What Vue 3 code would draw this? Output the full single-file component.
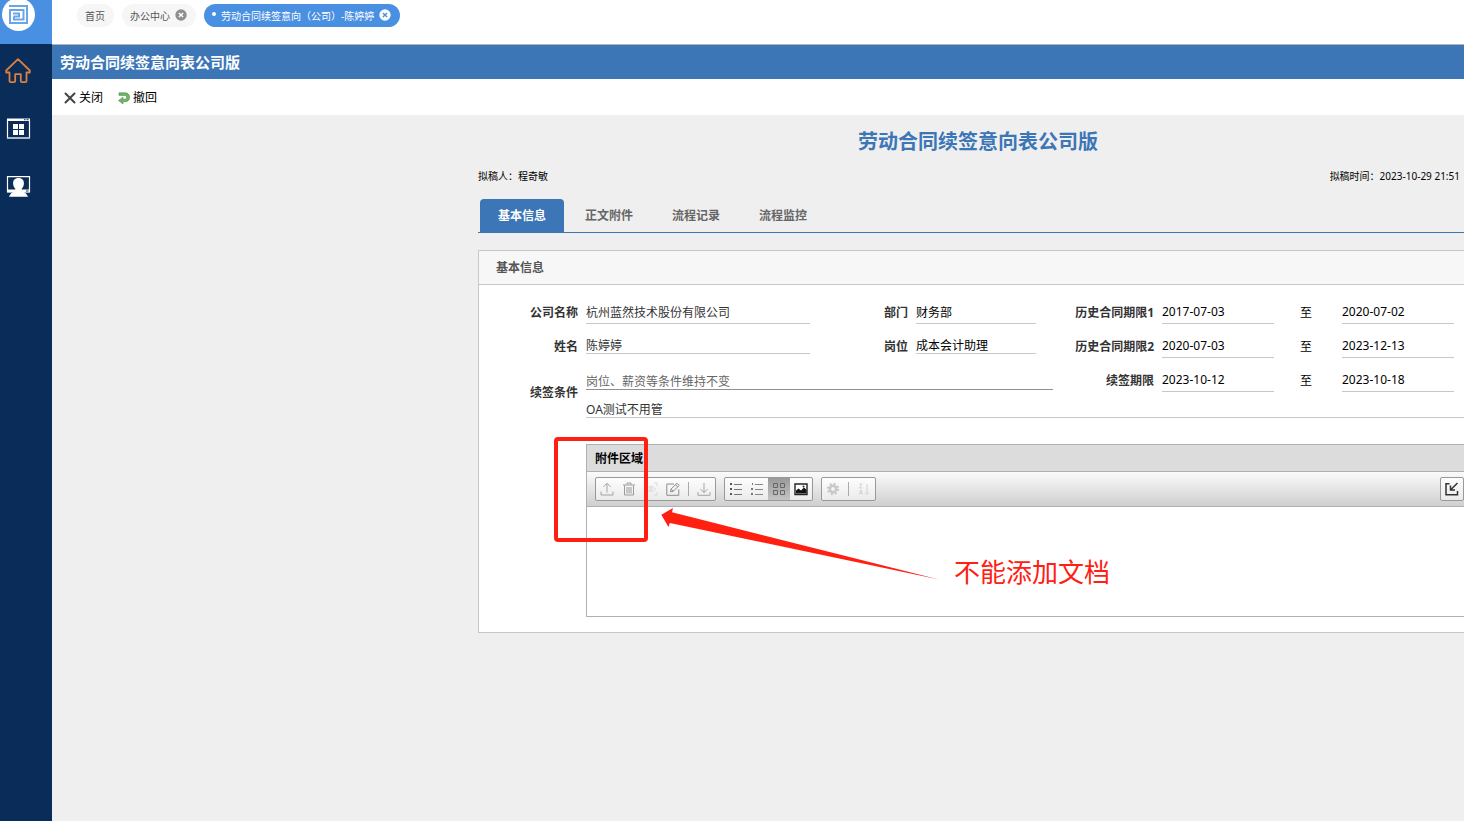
<template>
  <div class="page">
    <!-- Left menu -->
    <nav class="sidebar">
      <a class="logo" href="#" aria-label="首页">
        <svg width="52" height="44" viewBox="0 0 52 44">
          <circle cx="18.500" cy="14.500" r="16.500" fill="#fff" />
          <g fill="none" stroke="#6aa5ea" stroke-width="2">
            <path d="M9 6h18v17H10V11" />
            <path d="M9 10h14.500v9.500H14V16.500" />
            <path d="M13 13.500h6v3h-5.500" />
          </g>
        </svg>
      </a>
      <a class="menu-item" href="#" aria-label="主页">
        <svg width="26" height="26" viewBox="0 0 26 26" fill="none" stroke="#dd7f3f" stroke-width="1.800" stroke-linejoin="round">
          <path d="M13 1.200 1.200 12.500v2h3.300v8.500q0 1.200 1.200 1.200h3.300q1.200 0 1.200-1.200v-6.800h5.600v6.800q0 1.200 1.200 1.200h3.300q1.200 0 1.200-1.200v-8.500h3.300v-2z" />
        </svg>
      </a>
      <a class="menu-item" href="#" aria-label="应用">
        <svg width="26" height="26" viewBox="0 0 26 26">
          <path d="M2.500 4h22v18h-22z" fill="none" stroke="#fff" stroke-width="1.200" />
          <path d="M2 2.500h23v2.500H2z" fill="#fff" />
          <path d="M19 3.700h1.500M21.500 3.700h2" stroke="#0a2c59" />
          <path d="M2 22h23" stroke="#b7c1cf" stroke-width="1.500" />
          <path d="M8 8h5v5H8zM14 8h5v5h-5zM8 14h5v5H8zM14 14h5v5h-5z" fill="#fff" />
        </svg>
      </a>
      <a class="menu-item" href="#" aria-label="人员">
        <svg width="26" height="26" viewBox="0 0 26 26">
          <path d="M2.500 2.600h22v15h-22z" fill="none" stroke="#fff" stroke-width="1.200" />
          <path d="M2 15.500h23v3H2z" fill="#fff" />
          <path d="M21 17h2.500" stroke="#0a2c59" />
          <path d="M13.500 4c3.700 0 5.500 2.300 5.400 5.500 0 2.500-1 4-2.200 5.200v2.200c2.600 1.200 5.300 2.500 6.300 5.800H4c1-3.300 3.700-4.600 6.300-5.800v-2.200C9.100 13.500 8.100 12 8.100 9.500 8 6.300 9.800 4 13.500 4z" fill="#fff" />
        </svg>
      </a>
    </nav>

    <main class="main">
      <header class="topbar">
        <div v-for="t in openTabs" :key="t.name" class="pill" :class="{ current: t.current }">
          <span v-if="t.current" class="dot"></span>
          <a href="#">{{ t.name }}</a>
          <button v-if="t.closable" class="pill-close" aria-label="关闭标签">
            <svg width="12" height="12" viewBox="0 0 12 12">
              <circle class="disc" cx="6" cy="6" r="5.700" />
              <path class="cross" d="M3.900 3.900l4.200 4.200M8.100 3.900L3.900 8.100" stroke-width="1.400" />
            </svg>
          </button>
        </div>
      </header>

      <div class="titlebar">劳动合同续签意向表公司版</div>

      <div class="actions">
        <button>
          <svg width="12" height="12" viewBox="0 0 12 12" fill="none" stroke="#444" stroke-width="2" stroke-linecap="round">
            <path d="M1.500 1.500l9 9M10.500 1.500l-9 9" />
          </svg>
          关闭
        </button>
        <button>
          <svg width="12" height="12" viewBox="0 0 12 12">
            <path d="M1 .8h6.500a4 4.300 0 0 1 0 8.900H5V12L.5 8.500 5 5.300V7.200h2.200a1.500 1.900 0 0 0 0-3.800H1z" fill="#6fb568" stroke="#4a9148" stroke-width=".6" />
          </svg>
          撤回
        </button>
      </div>

      <form class="sheet" @submit.prevent>
        <h1>劳动合同续签意向表公司版</h1>
        <div class="meta">
          <span>拟稿人：程奇敏</span>
          <span>拟稿时间：2023-10-29 21:51</span>
        </div>

        <div class="tabs">
          <button
            v-for="(name, i) in formTabs"
            :key="name"
            type="button"
            :class="{ active: activeTab === i }"
            @click="activeTab = i"
          >{{ name }}</button>
        </div>

        <section class="panel">
          <h2>基本信息</h2>
          <div class="fields">
            <label for="company">公司名称</label>
            <input id="company" class="soft" value="杭州蓝然技术股份有限公司" readonly />
            <label for="dept">部门</label>
            <input id="dept" value="财务部" readonly />
            <label for="from1">历史合同期限1</label>
            <input id="from1" value="2017-07-03" readonly />
            <label class="to" for="to1">至</label>
            <input id="to1" value="2020-07-02" readonly />

            <label for="name">姓名</label>
            <input id="name" class="soft low" value="陈婷婷" readonly />
            <label for="post">岗位</label>
            <input id="post" class="low" value="成本会计助理" readonly />
            <label for="from2">历史合同期限2</label>
            <input id="from2" value="2020-07-03" readonly />
            <label class="to" for="to2">至</label>
            <input id="to2" value="2023-12-13" readonly />

            <label class="tall" for="terms">续签条件</label>
            <input id="terms" class="terms" value="岗位、薪资等条件维持不变" readonly />
            <label for="from3">续签期限</label>
            <input id="from3" value="2023-10-12" readonly />
            <label class="to" for="to3">至</label>
            <input id="to3" value="2023-10-18" readonly />
            <input class="note soft" aria-label="续签条件说明" value="OA测试不用管" readonly />
          </div>

          <div class="attachment">
            <h3>附件区域</h3>
            <div class="toolbar">
              <div class="group">
                <button type="button" aria-label="上传">
                  <svg width="14" height="14" viewBox="0 0 14 14" stroke="#a3a3a3">
                    <path d="M1 9.500v3.500h12V9.500M7 10.500V1.500M3.500 4.800L7 1.300l3.500 3.500" />
                  </svg>
                </button>
                <button type="button" aria-label="删除">
                  <svg width="14" height="14" viewBox="0 0 14 14" stroke="#9a9a9a">
                    <path d="M1 3h12M5 2.500v-1.500h4v1.500M2.500 3.500v9.500h9V3.500M5 5v6.500M7 5v6.500M9 5v6.500" />
                  </svg>
                </button>
                <button type="button" aria-label="预览">
                  <svg width="14" height="14" viewBox="0 0 14 14" stroke="#dadada">
                    <path d="M1 4V1h3M10 1h3v3M13 10v3h-3M4 13H1v-3M2.500 7C5 3.700 9 3.700 11.500 7 9 10.300 5 10.300 2.500 7z" />
                    <circle cx="7" cy="7" r="1.300" />
                  </svg>
                </button>
                <button type="button" aria-label="编辑">
                  <svg width="14" height="14" viewBox="0 0 14 14" stroke="#8c8c8c">
                    <path d="M8 2H.8v11.300h12V7.500M4.500 9.800l.6-2.800L11 1.200l2.200 2.200-5.900 5.800zM9.500 2.700l2.200 2.200M5.200 7l2.100 2.200" />
                  </svg>
                </button>
                <i class="sep"></i>
                <button type="button" aria-label="下载">
                  <svg width="14" height="14" viewBox="0 0 14 14" stroke="#a3a3a3">
                    <path d="M1 10v3.300h12V10M7 1v9.500M3.500 7.200L7 10.700l3.500-3.500" />
                  </svg>
                </button>
              </div>

              <div class="group views">
                <button type="button" aria-label="列表">
                  <svg width="14" height="14" viewBox="0 0 14 14">
                    <path d="M1 1h2v2H1zM1 6h2v2H1zM1 11h2v2H1z" fill="#555" />
                    <path d="M5 2.500h8M5 7.500h8M5 12.500h8" stroke="#777" />
                  </svg>
                </button>
                <button type="button" aria-label="详细列表">
                  <svg width="14" height="14" viewBox="0 0 14 14">
                    <path d="M2 1h1v2H2zM1 6h2v2H1zM1 11h2v2H1z" fill="#777" />
                    <path d="M5 2.500h8M5 7.500h8M5 12.500h8" stroke="#888" />
                  </svg>
                </button>
                <button type="button" class="on" aria-label="图标">
                  <svg width="14" height="14" viewBox="0 0 14 14" stroke="#666">
                    <path d="M1.500 1.500h4v4h-4zM8.500 1.500h4v4h-4zM1.500 8.500h4v4h-4zM8.500 8.500h4v4h-4z" />
                  </svg>
                </button>
                <button type="button" aria-label="图片">
                  <svg width="14" height="14" viewBox="0 0 14 14">
                    <path d="M1 2h12v10.500H1z" fill="#fff" stroke="#222" stroke-width="1.400" />
                    <path d="M2 11.500V8.500l2.500-2 2.500 2 3-3 2.500 2.200v3.800z" fill="#111" />
                    <circle cx="9.500" cy="4.500" r="1" fill="#222" />
                  </svg>
                </button>
              </div>

              <div class="group">
                <button type="button" aria-label="设置">
                  <svg width="14" height="14" viewBox="0 0 14 14" stroke="#c8c8c8">
                    <circle cx="7" cy="7" r="3.200" stroke-width="2.600" />
                    <circle cx="7" cy="7" r="5.200" stroke-width="2" stroke-dasharray="2 2.084" />
                  </svg>
                </button>
                <i class="sep"></i>
                <button type="button" aria-label="排序">
                  <svg width="14" height="14" viewBox="0 0 14 14" stroke="#d2d2d2">
                    <path d="M2.500 2H5L2.500 6H5.500M2.500 12.500l1.500-4.500 1.500 4.500M3 11h2M10 2v10.500M8 10.500l2 2 2-2" />
                  </svg>
                </button>
              </div>

              <div class="group resize">
                <button type="button" aria-label="收起">
                  <svg width="14" height="14" viewBox="0 0 14 14" stroke="#333" stroke-width="1.500">
                    <path d="M4.500 1.800H1v11h11.500V9M12.500 1L6 7.500M5.500 3.500V8H10" />
                  </svg>
                </button>
              </div>
            </div>
            <div class="files"></div>

            <!-- Markup drawn over the form -->
            <div class="mark-box"></div>
            <svg class="mark-arrow" width="282" height="76" viewBox="0 0 282 76">
              <path d="M1.300 8.700L13 2l-1 4.200L279 73.500 9.800 17l-1.300 4z" fill="#ff2012" />
            </svg>
            <p class="mark-text">不能添加文档</p>
          </div>
        </section>
      </form>
    </main>
  </div>
</template>

<script setup>
import { ref } from 'vue';

const openTabs = [
  { name: '首页' },
  { name: '办公中心', closable: true },
  { name: '劳动合同续签意向（公司）-陈婷婷', closable: true, current: true }
];

const formTabs = ['基本信息', '正文附件', '流程记录', '流程监控'];
const activeTab = ref(0);
</script>

<style>
body {
  margin: 0;
  background: #efefef;
}
</style>

<style scoped>
.page {
  display: flex;
  min-height: 100vh;
  overflow: hidden;
  font-family: "Noto Sans", "Noto Sans CJK SC", sans-serif;
  font-size: 12px;
  line-height: 18px;
  color: #000;
}

button,
input {
  margin: 0;
  padding: 0;
  border: 0;
  border-radius: 0;
  background: none;
  font: inherit;
  color: inherit;
  outline: none;
}

a {
  color: inherit;
  text-decoration: none;
}

svg {
  display: block;
  flex: none;
}

/* Sidebar */
.sidebar {
  flex: none;
  width: 52px;
  background: #0a2c59;
}

.logo {
  display: block;
  height: 44px;
  background: #4a90e2;
}

.menu-item {
  display: block;
  padding: 14px 0 18px 5px;
}

.main {
  flex: 1;
  min-width: 0;
}

/* Open page tabs */
.topbar {
  display: flex;
  align-items: flex-start;
  gap: 8px;
  height: 40px;
  padding: 4px 0 0 25px;
  background: #fff;
  border-bottom: 1px solid #b5b5b5;
}

.pill {
  display: flex;
  align-items: center;
  height: 23px;
  padding: 0 9px 0 8px;
  border-radius: 12px;
  background: #f6f6f6;
  color: #555;
  font-size: 10px;
  white-space: nowrap;
}

.pill.current {
  background: #4a90e2;
  color: #fff;
}

.dot {
  width: 4px;
  height: 4px;
  margin: 0 5px 3px 0;
  border-radius: 50%;
  background: #fff;
}

.pill-close {
  margin: 0 0 2px 5px;
}

.disc {
  fill: #8f8f8f;
}

.cross {
  stroke: #fff;
}

.current .disc {
  fill: #fff;
}

.current .cross {
  stroke: #4a90e2;
}

.titlebar {
  padding: 0 8px;
  background: #3c76b7;
  color: #fff;
  font-size: 15px;
  font-weight: bold;
  line-height: 34px;
}

.actions {
  display: flex;
  gap: 15px;
  height: 35px;
  padding: 1px 12px 0;
  background: #fff;
}

.actions button {
  display: flex;
  align-items: center;
  gap: 3px;
}

/* Form */
.sheet {
  margin-right: -14px;
  padding: 13px 0 40px 426px;
}

h1 {
  margin: 0;
  color: #3c76b7;
  font-size: 20px;
  line-height: 28px;
  text-align: center;
}

.meta {
  display: flex;
  justify-content: space-between;
  padding: 11px 18px 14px 0;
  font-size: 10px;
}

.tabs {
  display: flex;
  gap: 3px;
  padding-left: 2px;
  border-bottom: 1px solid #3c76b7;
}

.tabs button {
  height: 33px;
  padding: 0 18px;
  border-radius: 4px 4px 0 0;
  color: #666;
  font-weight: bold;
}

.tabs .active {
  background: #3c76b7;
  color: #fff;
}

.panel {
  margin-top: 17px;
  border: 1px solid #c8c8c8;
  background: #fff;
}

h2 {
  margin: 0;
  padding: 0 17px;
  border-bottom: 1px solid #c8c8c8;
  background: #f7f7f7;
  color: #555;
  font-size: 12px;
  line-height: 33px;
}

.fields {
  display: grid;
  grid-template-columns: 99px 224px 90px 120px 110px 112px 52px 112px;
  grid-template-rows: 34px 34px 34px 24px;
  column-gap: 8px;
  align-items: center;
  padding-top: 10px;
}

label {
  padding-top: 2px;
  color: #333;
  font-weight: bold;
  text-align: right;
}

.to {
  padding-right: 4px;
  color: #000;
  font-weight: normal;
  text-align: center;
}

.fields input {
  box-sizing: border-box;
  width: 100%;
  height: 24px;
  border-bottom: 1px solid #c8c8c8;
}

.fields .soft {
  color: #333;
}

.fields .low {
  height: 16px;
}

.tall {
  grid-column: 1;
  grid-row: 3 / 5;
}

.fields .terms {
  grid-column: 2 / 5;
  width: 467px;
  height: 20px;
  padding-top: 2px;
  border-color: #8f8f8f;
  color: #666;
}

.fields .note {
  grid-column: 2 / -1;
  grid-row: 4;
  width: auto;
  height: 18px;
  margin-right: -24px;
  padding-top: 2px;
}

/* Attachment area */
.attachment {
  position: relative;
  margin: 23px 0 15px 107px;
  border: 1px solid #b0b0b0;
  border-right: 0;
}

h3 {
  margin: 0;
  padding: 1px 8px 0;
  border-bottom: 1px solid #b0b0b0;
  background: #dcdcdc;
  font-size: 12px;
  line-height: 25px;
}

.toolbar {
  display: flex;
  gap: 8px;
  padding: 5px 13px 5px 8px;
  border-bottom: 1px solid #b0b0b0;
  background: linear-gradient(#fbfbfb, #cfcfcf);
}

.group {
  display: flex;
  align-items: center;
  height: 22px;
  border: 1px solid #999;
  border-radius: 2px;
  background: linear-gradient(#fdfdfd, #ebebeb);
}

.group button {
  display: flex;
  align-items: center;
  justify-content: center;
  width: 22px;
  height: 100%;
}

.views button:first-child {
  width: 21px;
}

.group svg {
  fill: none;
}

.group .on {
  background: linear-gradient(#999, #c4c4c4);
}

.sep {
  width: 1px;
  height: 14px;
  margin: 0 4px;
  background: #aaa;
}

.resize {
  margin-left: auto;
}

.files {
  height: 109px;
}

.mark-box {
  position: absolute;
  top: -8px;
  left: -33px;
  width: 86px;
  height: 97px;
  border: 4px solid #ff2012;
  border-radius: 4px;
}

.mark-arrow {
  position: absolute;
  top: 61px;
  left: 73px;
}

.mark-text {
  position: absolute;
  top: 111px;
  left: 367px;
  margin: 0;
  color: #ff2012;
  font-size: 26px;
  line-height: 32px;
}
</style>
